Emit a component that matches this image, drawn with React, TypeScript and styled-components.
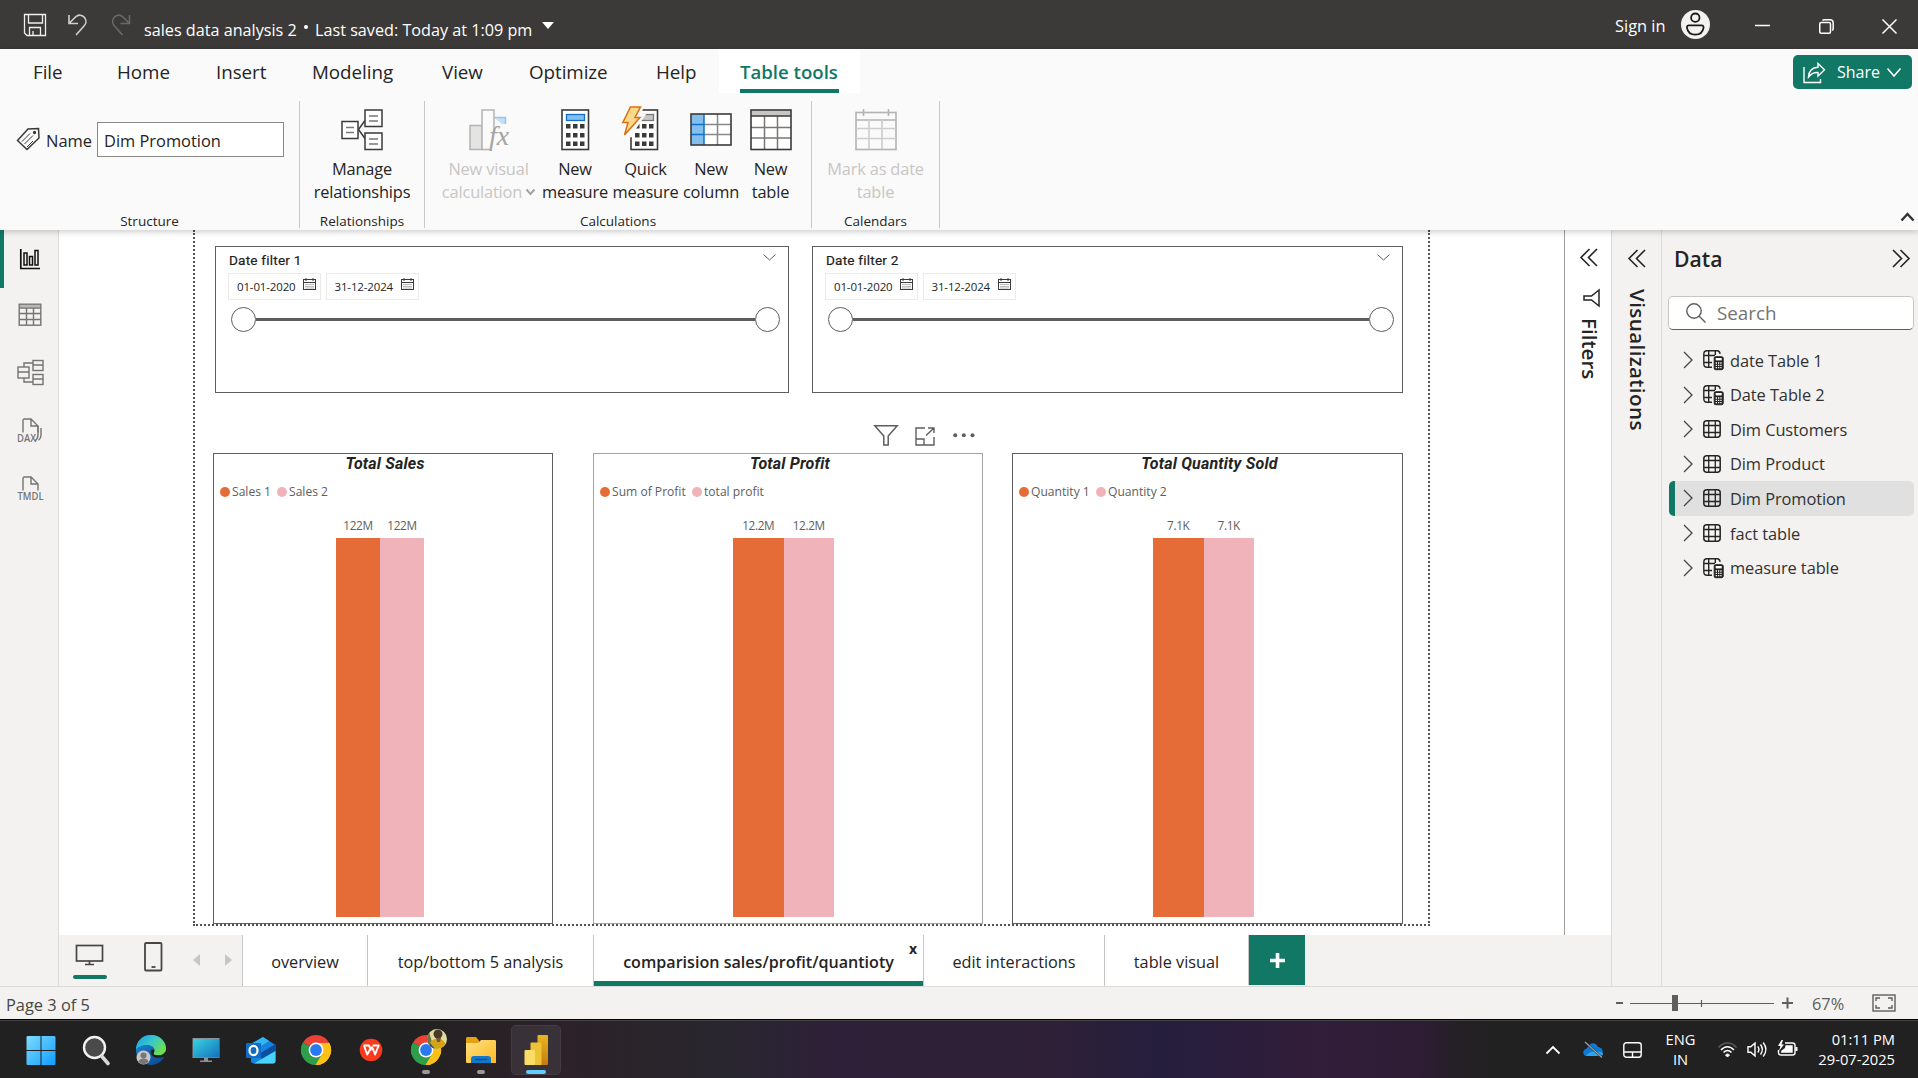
import React from 'react';
import styled, { createGlobalStyle } from 'styled-components';

const GREEN = '#117865';
const UI = "'Open Sans', 'Noto Sans', sans-serif";
const DIN = "Roboto, 'Open Sans', sans-serif";

const Global = createGlobalStyle`
  * { box-sizing: border-box; }
  body { margin: 0; overflow: hidden; font-family: ${UI}; color: #252423; }
  svg { display: block; flex: none; overflow: visible; }
`;

const Screen = styled.div`
  width: 1918px;
  height: 1078px;
  display: flex;
  flex-direction: column;
  background: #fff;
  overflow: hidden;
`;

/* ---------- text ---------- */
const Label = styled.span<{ $size: number; $lh?: number; $color?: string; $weight?: number; $track?: number; $w?: number; $align?: string }>`
  display: block;
  flex: none;
  white-space: nowrap;
  font-size: ${p => p.$size}px;
  line-height: ${p => p.$lh ?? 23}px;
  color: ${p => p.$color ?? '#252423'};
  font-weight: ${p => p.$weight ?? 400};
  letter-spacing: ${p => p.$track ?? 0}px;
  width: ${p => (p.$w ? `${p.$w}px` : 'auto')};
  text-align: ${p => p.$align ?? 'left'};
`;

/* ---------- title bar ---------- */
const TitleBar = styled.header`
  height: 49px;
  flex: none;
  display: flex;
  background: #3b3a38;
`;
const QuickAccess = styled.div`
  width: 144px;
  padding: 13px 0 0 23px;
  display: flex;
  gap: 20px;
`;
const DocTitle = styled.div`
  display: flex;
  flex: 1;
  padding-top: 19px;
`;
const DocName = styled.div`width: 157px;`;
const Bullet = styled.i`
  width: 4px;
  height: 4px;
  margin: 6px 7px 0 3px;
  border-radius: 50%;
  background: #fff;
`;
const DocSaved = styled.div`width: 223px;`;
const Caret = styled.i`
  margin: 3px 0 0 4px;
  width: 0;
  height: 0;
  border: 6.5px solid transparent;
  border-top: 7px solid #fff;
`;
const WindowControls = styled.div`
  width: 303px;
  display: flex;
  padding-top: 10px;
`;
const SignIn = styled.div`
  width: 66px;
  padding-top: 4px;
`;

/* ---------- ribbon ---------- */
const Ribbon = styled.section`
  height: 181px;
  flex: none;
  background: #fafafa;
  position: relative;
  z-index: 2;
  box-shadow: 0 2px 6px rgba(0, 0, 0, 0.2);
  display: flex;
  flex-direction: column;
`;
const TabStrip = styled.nav`
  height: 44px;
  display: flex;
  padding-left: 33px;
`;
const RibbonTab = styled.div<{ $w: number }>`
  width: ${p => p.$w}px;
  padding-top: 10px;
`;
const ActiveRibbonTab = styled.div`
  width: 141px;
  background: #fff;
  padding: 10px 0 0 21px;
`;
const ActiveLine = styled.i`
  display: block;
  width: 99px;
  height: 4px;
  margin-top: 4px;
  background: ${GREEN};
`;
const ShareButton = styled.button`
  margin: 6px 6px 0 auto;
  width: 119px;
  height: 34px;
  padding: 1px 0 0 10px;
  border: 0;
  border-radius: 5px;
  background: ${GREEN};
  display: flex;
  align-items: center;
  gap: 7px;
  font-family: inherit;
`;
const ShareText = styled.div`
  width: 47px;
  padding-left: 4px;
`;
const RibbonBody = styled.div`
  flex: 1;
  display: flex;
  padding-top: 8px;
`;
const Group = styled.div<{ $w: number }>`
  width: ${p => p.$w}px;
  height: 127px;
  border-right: 1px solid #c8c8c8;
  display: flex;
  flex-direction: column;
`;
const GroupItems = styled.div<{ $pad?: number }>`
  height: 108px;
  flex: none;
  display: flex;
  padding-left: ${p => p.$pad ?? 0}px;
`;
const GroupName = styled.div`
  flex: none;
  text-align: center;
  padding-top: 4px;
  font-size: 13.5px;
  line-height: 16px;
`;
const Command = styled.div<{ $w: number }>`
  width: ${p => p.$w}px;
  display: flex;
  flex-direction: column;
  align-items: center;
`;
const CommandIcon = styled.div`
  height: 56px;
  padding-top: 8px;
`;
const CommandLine = styled.div`
  display: flex;
  align-items: center;
  gap: 4px;
`;
const NameField = styled.div`
  display: flex;
  padding: 21px 0 0 16px;
  width: 100%;
`;
const NameLabel = styled.div`
  padding: 7px 0 0 6px;
  width: 57px;
`;
const TagSlot = styled.div`padding-top: 5px; width: 24px;`;
const NameInput = styled.div`
  width: 187px;
  height: 35px;
  border: 1px solid #8a8886;
  background: #fff;
  padding: 6px 0 0 6px;
`;
const CollapseSlot = styled.div`
  margin-left: auto;
  padding: 112px 4px 0 0;
`;

/* ---------- workspace ---------- */
const Workspace = styled.main`
  height: 756px;
  flex: none;
  display: flex;
`;
const ViewRail = styled.aside`
  width: 59px;
  background: #f3f2f1;
  border-right: 1px solid #dddbd9;
  display: flex;
  flex-direction: column;
`;
const RailItem = styled.div<{ $active?: boolean }>`
  height: 58px;
  border-left: 4px solid ${p => (p.$active ? GREEN : 'transparent')};
  padding: 0 2px ${p => (p.$active ? 0 : 5)}px 0;
  display: flex;
  align-items: center;
  justify-content: center;
`;
const Stage = styled.div`
  width: 1552px;
  display: flex;
  flex-direction: column;
`;
const CanvasRow = styled.div`
  height: 705px;
  display: flex;
`;
const Canvas = styled.div`
  width: 1505px;
  padding-left: 134px;
  background: #fff;
`;
const ReportPage = styled.div`
  width: 1237px;
  height: 696px;
  border: 2px dotted #555351;
  border-top: 0;
  padding-top: 16px;
`;
const SlicerRow = styled.div`
  display: flex;
  gap: 23px;
  padding-left: 20px;
`;
const Slicer = styled.section<{ $w: number }>`
  width: ${p => p.$w}px;
  height: 147px;
  border: 1px solid #605e5c;
  padding: 0 12px 0 12px;
`;
const SlicerHead = styled.div`
  height: 26px;
  display: flex;
  justify-content: space-between;
  padding: 3px 0 0 1px;
`;
const SlicerTitle = styled.h4`
  margin: 0;
  font: 400 13.6px/20px ${DIN};
  letter-spacing: 0.2px;
  color: #1b1a19;
  -webkit-text-stroke: 0.2px #252423;
`;
const SlicerChevron = styled.div`padding-top: 4px;`;
const DateRow = styled.div`
  display: flex;
  gap: 4.5px;
`;
const DateInput = styled.div`
  width: 93px;
  height: 27px;
  border: 1px solid #edebe9;
  padding: 4px 4px 0 8px;
  display: flex;
  justify-content: space-between;
`;
const Range = styled.div`
  display: flex;
  align-items: center;
  padding: 6.5px 2px 0 3px;
  margin-right: -6px;
`;
const Thumb = styled.i`
  width: 25px;
  height: 25px;
  flex: none;
  border: 1.5px solid #605e5c;
  border-radius: 50%;
  background: #fff;
`;
const Track = styled.i`
  flex: 1;
  height: 3px;
  background: #605e5c;
`;
const VisualHeader = styled.div`
  height: 60px;
  display: flex;
  padding: 32px 0 0 679px;
  gap: 17px;
`;
const ChartRow = styled.div`
  display: flex;
  padding-left: 18px;
`;
const ChartCard = styled.section<{ $w: number; $gap?: number; $tone?: string }>`
  width: ${p => p.$w}px;
  height: 471px;
  flex: none;
  margin-right: ${p => p.$gap ?? 0}px;
  border: 1px solid ${p => p.$tone ?? '#605e5c'};
`;
const ChartTitle = styled.h3`
  margin: 0;
  padding-left: 4px;
  font: italic 700 16px/20px ${DIN};
  letter-spacing: 0.2px;
  text-align: center;
  color: #252423;
`;
const Legend = styled.div`
  display: flex;
  height: 26px;
  padding: 8px 0 0 6px;
`;
const LegendItem = styled.div<{ $w: number }>`
  display: flex;
  width: ${p => p.$w}px;
  gap: 2px;
`;
const Dot = styled.i<{ $color: string }>`
  width: 10px;
  height: 10px;
  margin-top: 5px;
  border-radius: 50%;
  background: ${p => p.$color};
`;
const Bars = styled.div<{ $left: number }>`
  display: flex;
  padding: 14px 0 0 ${p => p.$left}px;
`;
const BarColumn = styled.div<{ $w: number }>`
  width: ${p => p.$w}px;
`;
const Bar = styled.div<{ $color: string }>`
  height: 379px;
  margin-top: 2px;
  background: ${p => p.$color};
`;

/* ---------- side panes ---------- */
const FilterPane = styled.aside`
  width: 47px;
  border-left: 1px solid #a19f9d;
  display: flex;
  flex-direction: column;
  align-items: flex-start;
  padding: 18px 0 0 15px;
  background: #fff;
`;
const VizPane = styled.aside`
  width: 51px;
  background: #f3f2f1;
  border-left: 1px solid #dddbd9;
  border-right: 1px solid #dddbd9;
  padding: 19px 0 0 16px;
`;
const FunnelSlot = styled.div`padding: 22px 0 0 3px; height: 52px;`;
const Vertical = styled.div<{ $top: number; $track?: number }>`
  writing-mode: vertical-rl;
  font-weight: 600;
  font-size: 20.6px;
  line-height: 24px;
  letter-spacing: ${p => p.$track ?? 0}px;
  margin: ${p => p.$top}px 0 0 -2px;
  white-space: nowrap;
`;
const DataPane = styled.aside`
  flex: 1;
  background: #f3f2f1;
  padding: 15px 4px 0 6px;
`;
const DataHead = styled.div`
  display: flex;
  justify-content: space-between;
  padding: 0 4px 0 6px;
  height: 51px;
`;
const ChevronSlot = styled.div`padding-top: 4px;`;
const SearchBox = styled.div`
  height: 34px;
  border: 1px solid #c8c6c4;
  border-bottom-color: #605e5c;
  border-radius: 5px;
  background: #fff;
  display: flex;
  align-items: center;
  gap: 11px;
  padding-left: 17px;
`;
const TableList = styled.div`
  padding: 13px 0 0 1px;
`;
const TableRow = styled.div<{ $selected?: boolean }>`
  height: 34.55px;
  display: flex;
  align-items: center;
  border-radius: 5px;
  border-left: 6px solid ${p => (p.$selected ? GREEN : 'transparent')};
  background: ${p => (p.$selected ? '#e0e0e0' : 'transparent')};
  padding-left: 8px;
`;
const ExpandSlot = styled.div`width: 20px;`;
const TableIconSlot = styled.div`width: 27px;`;

/* ---------- page tabs ---------- */
const PageBar = styled.div`
  height: 51px;
  display: flex;
  background: #f3f2f1;
`;
const LayoutButtons = styled.div`
  width: 183px;
  display: flex;
  padding-left: 14px;
`;
const DesktopButton = styled.div`
  width: 70px;
  padding-top: 8px;
`;
const DesktopLine = styled.i`
  display: block;
  width: 34px;
  height: 4px;
  margin-top: 10px;
  border-radius: 2px;
  background: ${GREEN};
`;
const PhoneButton = styled.div`width: 50px; padding: 7px 0 0 1px;`;
const PageArrow = styled.div`
  padding-top: 19px;
  &:not(:last-child) { width: 32px; }
`;
const PageTab = styled.div<{ $w: number; $active?: boolean }>`
  width: ${p => p.$w}px;
  border-left: 1px solid #c8c6c4;
  background: #fff;
  display: flex;
  justify-content: center;
  padding-top: 16px;
  position: relative;
  box-shadow: ${p => (p.$active ? `inset 0 -5px 0 ${GREEN}` : 'none')};
`;
const TabClose = styled.span`
  position: absolute;
  right: 6px;
  top: 2px;
  font-size: 14px;
  font-weight: 700;
  line-height: 23px;
`;
const AddPage = styled.div`
  width: 57px;
  height: 50px;
  background: ${GREEN};
  border-left: 1px solid #c8c6c4;
  display: flex;
  align-items: center;
  justify-content: center;
`;

/* ---------- status bar ---------- */
const StatusBar = styled.footer`
  height: 33px;
  flex: none;
  background: #f3f2f1;
  border-top: 1px solid #dddbd9;
  display: flex;
  justify-content: space-between;
  padding: 6px 22px 0 6px;
`;
const ZoomControls = styled.div`
  display: flex;
  height: 20px;
  align-items: center;
`;
const ZoomText = styled.div`
  width: 79px;
  padding: 1px 0 0 19px;
`;

/* ---------- taskbar ---------- */
const Taskbar = styled.footer`
  flex: 1;
  border-top: 1px solid #000;
  box-shadow: inset 0 1px 0 #444;
  display: flex;
  justify-content: space-between;
  background: linear-gradient(90deg, #212121 0, #212121 400px, #2d2129 540px, #2b2329 600px, #28262f 730px, #2e2038 830px,
    #2f2037 1040px, #251e3d 1160px, #321d3a 1320px, #2e1d35 1420px, #242025 1460px, #212121 1500px);
`;
const Apps = styled.div`
  display: flex;
  padding: 5px 0 0 16px;
  gap: 5px;
`;
const TaskbarApp = styled.div<{ $active?: boolean }>`
  width: 50px;
  height: 50px;
  border-radius: 5px;
  border: 1px solid ${p => (p.$active ? '#453c43' : 'transparent')};
  background: ${p => (p.$active ? '#393138' : 'transparent')};
  display: flex;
  flex-direction: column;
  align-items: center;
  padding-top: 9px;
`;
const RunMark = styled.i<{ $active?: boolean }>`
  width: ${p => (p.$active ? 20 : 8)}px;
  height: 4px;
  border-radius: 2px;
  margin-top: 5px;
  background: ${p => (p.$active ? '#60cdff' : '#9a9a9a')};
`;
const Tray = styled.div`
  display: flex;
  padding: 10px 23px 0 0;
`;
const TraySlot = styled.div<{ $w: number; $top?: number }>`
  width: ${p => p.$w}px;
  padding-top: ${p => p.$top ?? 0}px;
`;
const TrayText = styled.div<{ $w: number; $align: string }>`
  width: ${p => p.$w}px;
  text-align: ${p => p.$align};
  font-size: 14.7px;
  line-height: 19.8px;
  color: #fff;
  white-space: nowrap;
`;

/* ---------- icons ---------- */
const SaveIcon = () => (
  <svg width="24" height="24" viewBox="0 0 24 24" fill="none" stroke="#f0efee" strokeWidth="1.3">
    <path d="M1.5 1.5h21v21H4L1.5 20z" /><path d="M5.5 1.5v8.5h14V1.5M6.5 22.5v-8h11v8M10 18v4.5" />
  </svg>
);
const UndoIcon = ({ color, flip }: { color: string; flip?: boolean }) => (
  <svg width="24" height="24" viewBox="0 0 24 24" fill="none" stroke={color} strokeWidth="1.6">
    <g transform={flip ? 'translate(20 0) scale(-1 1)' : 'translate(.5 0)'}>
      <path d="M1.500 2v8.500h9M1.500 10.500L8 4c3-3 7-2 9 .5s2 6-.5 8.500L8.500 22" />
    </g>
  </svg>
);
const AvatarIcon = () => (
  <svg width="30" height="30" viewBox="0 0 30 30">
    <circle cx="14.500" cy="14.500" r="14.500" fill="#f3f2f1" />
    <g fill="none" stroke="#1b1a19" strokeWidth="1.800">
      <circle cx="14.300" cy="7.700" r="4.200" />
      <path d="M8 15.300h12.500c1.500 0 2.300 1 2 2.600-.7 4.200-3.900 6.800-8.200 6.800s-7.600-2.600-8.300-6.800c-.3-1.600.5-2.600 2-2.600z" />
    </g>
  </svg>
);
const MinIcon = () => <svg width="15" height="15"><path d="M0 6.500h15" stroke="#fff" strokeWidth="1.500" /></svg>;
const RestoreIcon = () => (
  <svg width="15" height="15" fill="none" stroke="#fff" strokeWidth="1.500">
    <rect x=".75" y="3.500" width="10.750" height="10.750" rx="1.500" /><path d="M3.500 1.500C4 .9 4.700.75 5.500.75h5.500c2 0 3.200 1.200 3.200 3.200V9.500c0 .9-.3 1.500-.9 2" />
  </svg>
);
const CloseIcon = () => <svg width="15" height="15"><path d="M.5.5l14 14M14.500.5l-14 14" stroke="#fff" strokeWidth="1.500" /></svg>;
const ShareIcon = () => (
  <svg width="23" height="22" viewBox="0 0 23 22" fill="none" stroke="#fff" strokeWidth="1.400">
    <path d="M1 5v15.500h16.500V17" />
    <path d="M15 1.500l6.500 6.300-6.500 6.400v-3.700c-4-.3-7 1.200-9.500 4.500.3-5.500 3.500-9.500 9.500-9.800z" />
  </svg>
);
const Chevron = ({ w, h, color, sw = 1.3, up }: { w: number; h: number; color: string; sw?: number; up?: boolean }) => (
  <svg width={w} height={h} fill="none" stroke={color} strokeWidth={sw}>
    <path d={up ? `M.5 ${h - 0.5}L${w / 2} 1L${w - 0.5} ${h - 0.5}` : `M.5 .5L${w / 2} ${h - 1}L${w - 0.5} .5`} />
  </svg>
);
const ExpandIcon = () => <svg width="10" height="18" fill="none" stroke="#484644" strokeWidth="1.300"><path d="M1 1l8 8-8 8" /></svg>;
const DoubleChevron = ({ right }: { right?: boolean }) => (
  <svg width="18" height="19" fill="none" stroke="#252423" strokeWidth="1.600">
    <g transform={right ? 'translate(18 0) scale(-1 1)' : undefined}>
      <path d="M9.500 1L1 9.500l8.500 8.500M17 1L8.500 9.500 17 18" />
    </g>
  </svg>
);
const TagIcon = () => (
  <svg width="24" height="24" viewBox="0 0 24 24" fill="none" stroke="#3b3a39" strokeWidth="1.500">
    <path d="M1.500 13.500L12 2l10.500-.5.5 9.500L11 22.500z" /><path d="M6 14.500l8-8M8.500 17l8.500-8.500M11 20l6-6" strokeWidth="1" /><circle cx="18.500" cy="5.500" r=".9" fill="#3b3a39" />
  </svg>
);
const RelationIcon = () => (
  <svg width="42" height="42" viewBox="0 0 42 42" fill="none" stroke="#3b3a39" strokeWidth="1.500">
    <path d="M17.500 20.500l6.500-9M17.500 20.500l6.500 9" />
    <g fill="#fff"><rect x="1" y="12.500" width="16" height="17" /><rect x="24" y="1" width="17" height="16.500" /><rect x="24" y="24" width="17" height="16.500" /></g>
    <path d="M5 18.500h8M5 23.500h8M28 7h9M28 12h9M28 30h9M28 35h9" stroke="#797775" strokeWidth="1.300" />
  </svg>
);
const VisualCalcIcon = () => (
  <svg width="39" height="42" viewBox="0 0 39 42" fill="none" stroke="#b5b3b1" strokeWidth="1.500">
    <rect x="1" y="16.500" width="12" height="24" fill="#e4e4e3" /><rect x="13" y="1" width="12" height="39.500" fill="#fafafa" />
    <path d="M25 8.500h11.500V18" stroke="#9ac4e8" fill="#c5dff5" />
    <path d="M21 42V30l5-12 4-3h10v27z" fill="#fafafa" stroke="none" />
    <text x="20" y="36" fontFamily="Liberation Serif, serif" fontStyle="italic" fontSize="28" fill="#a6a4a2" stroke="none">fx</text>
  </svg>
);
const Keys = () => (
  <g fill="#3b3a39">
    {[15, 24, 32.500].map(y => [5, 12, 19].map(x => <rect key={`${x}-${y}`} x={x} y={y} width="4.500" height="4.500" />))}
  </g>
);
const MeasureIcon = () => (
  <svg width="29" height="42" viewBox="0 0 29 42">
    <rect x="1" y="1" width="26.500" height="39.500" fill="#fff" stroke="#3b3a39" strokeWidth="1.600" />
    <rect x="5.500" y="5.500" width="18" height="6" fill="#83beec" stroke="#1070c8" strokeWidth="1.300" /><Keys />
  </svg>
);
const QuickIcon = () => (
  <svg width="47" height="42" viewBox="0 0 47 42">
    <g transform="translate(8 0)">
      <rect x="1" y="1" width="26.500" height="39.500" fill="#fff" stroke="#3b3a39" strokeWidth="1.600" />
      <rect x="5.500" y="5.500" width="18" height="6" fill="#c8c6c4" stroke="#797775" strokeWidth="1.300" /><Keys />
    </g>
    <path d="M7-4H21.500L17 6h5L11 22 9.500 27H6z" fill="#fafafa" stroke="#fafafa" strokeWidth="2.500" />
    <path d="M8.500-2H18.500L13 8.500h5L2.500 26l3.500-12.500H.8z" fill="#fbd98a" stroke="#d96f10" strokeWidth="1.500" />
  </svg>
);
const ColumnIcon = () => (
  <svg width="42" height="42" viewBox="0 0 42 42" fill="none">
    <rect x="1" y="5" width="40" height="31" fill="#fff" /><rect x="1" y="5" width="13" height="31" fill="#83beec" />
    <path d="M14 15.500h27M14 25.500h27M27.500 5v31" stroke="#8a8886" strokeWidth="1.500" />
    <path d="M1 15.500h13M1 25.500h13M14 5v31" stroke="#1070c8" strokeWidth="1.500" />
    <rect x="1" y="5" width="40" height="31" stroke="#3b3a39" strokeWidth="1.600" />
  </svg>
);
const NewTableIcon = () => (
  <svg width="42" height="42" viewBox="0 0 42 42" fill="none">
    <rect x="1" y="1" width="40" height="39.500" fill="#fff" /><rect x="1" y="1" width="40" height="6" fill="#c8c6c4" />
    <path d="M1 18.500h40M1 29h40M14.500 7v33M27.500 7v33" stroke="#797775" strokeWidth="1.500" />
    <path d="M1 7h40" stroke="#3b3a39" strokeWidth="1.500" /><rect x="1" y="1" width="40" height="39.500" stroke="#3b3a39" strokeWidth="1.600" />
  </svg>
);
const CalendarLarge = () => (
  <svg width="42" height="42" viewBox="0 0 42 42" fill="none" stroke="#b5b3b1" strokeWidth="1.600">
    <rect x="1" y="3.500" width="40" height="37" /><path d="M1 11h40M8.500 0v7M33.500 0v7" /><path d="M1 19.500h40M1 29.500h40M14 11v29M27 11v29" stroke="#cfcdcb" />
  </svg>
);
const ReportIcon = () => (
  <svg width="20" height="21" viewBox="0 0 20 21" fill="none" stroke="#11100f" strokeWidth="1.500">
    <path d="M.8 0v19.500H20" strokeWidth="1.700" /><rect x="4" y="4" width="3" height="12" /><rect x="9.500" y="7.500" width="3" height="8.500" /><rect x="15" y="1.500" width="3" height="14.500" />
  </svg>
);
const GridIcon = () => (
  <svg width="24" height="24" viewBox="0 0 24 24" fill="none" stroke="#767473" strokeWidth="1.400">
    <rect x="1.200" y="1.200" width="21.600" height="21" /><path d="M1 5h22M1 10.500h22M1 16.500h22M8.500 5v17M15.500 5v17" /><path d="M2 3h20" stroke="#bab8b6" strokeWidth="2" />
  </svg>
);
const ModelIcon = () => (
  <svg width="27" height="27" viewBox="0 0 27 27" fill="none" stroke="#767473" strokeWidth="1.400">
    <rect x="1" y="8" width="11" height="11" /><rect x="16" y="1.500" width="10" height="10" /><rect x="16" y="15.500" width="10" height="10" />
    <path d="M1 13h11M16 6h10M16 20h10M7 8V4h9M7 19v4h9" />
  </svg>
);
const DocIcon = ({ label, double }: { label: string; double?: boolean }) => (
  <svg width="27" height="26" viewBox="0 0 27 26" fill="none" stroke="#767473" strokeWidth="1.400">
    <path d="M6 14.500V2.500C6 1.500 6.500 1 7.500 1H14l7 7v6.500M14 1v7h7" />
    {double && <path d="M21 8v8.500c0 3-1 5-3 6.500M24 10v7c0 2.500-.8 4-2.500 5.200" />}
    <text x={double ? 0 : 0.5} y="23.500" fontFamily="Open Sans, sans-serif" fontWeight="600" fontSize="9.800" fill="#767473" stroke="none"
      textLength={double ? 19 : 26} lengthAdjust="spacingAndGlyphs">{label}</text>
  </svg>
);
const SmallCalendar = () => (
  <svg width="13" height="12" viewBox="0 0 13 12" fill="none" stroke="#3b3a39" strokeWidth="1">
    <rect x=".5" y="1.500" width="12" height="10" /><path d="M.5 4.500h12M3 0v3M10 0v3" /><path d="M2.500 6.500h8.500M2.500 8.500h8.500M2.500 10h8.500" strokeDasharray="1 1" stroke="#797775" />
  </svg>
);
const FilterIcon = () => (
  <svg width="24" height="21" viewBox="0 0 24 21" fill="none" stroke="#605e5c" strokeWidth="1.500"><path d="M.8.8h22.400L14.200 11v9h-4.400v-9z" /></svg>
);
const FocusIcon = () => (
  <svg width="20" height="19" viewBox="0 0 20 19" fill="none" stroke="#605e5c" strokeWidth="1.400">
    <path d="M10 1H1v17h18v-8M13 1h6v5M1 12h8v6M11 8.500L19 1" />
  </svg>
);
const MoreIcon = () => (
  <svg width="22" height="5" fill="#605e5c"><circle cx="2.200" cy="2.200" r="2" /><circle cx="10.800" cy="2.200" r="2" /><circle cx="19.500" cy="2.200" r="2" /></svg>
);
const FunnelSide = () => (
  <svg width="17" height="18" viewBox="0 0 17 18" fill="none" stroke="#252423" strokeWidth="1.500"><path d="M16 1v16L8.500 11H1V7h7.500z" /></svg>
);
const SearchIcon = () => (
  <svg width="20" height="20" viewBox="0 0 20 20" fill="none" stroke="#605e5c" strokeWidth="1.400"><circle cx="8" cy="8" r="7.200" /><path d="M13.200 13.200l6.300 6.300" /></svg>
);
const TableIcon = () => (
  <svg width="21" height="18" viewBox="0 0 21 18" fill="none" stroke="#252423" strokeWidth="1.500">
    <rect x=".8" y=".8" width="16.400" height="16.400" rx="3" /><path d="M5.700 1v16M12.300 1v16M1 5.500h16M1 12.500h16" strokeWidth="1.300" />
  </svg>
);
const CalcTableIcon = () => (
  <svg width="21" height="20" viewBox="0 0 21 20" fill="none" stroke="#252423" strokeWidth="1.400">
    <path d="M9 17.300H4c-2 0-3.200-1.200-3.200-3.200V4C.8 2 2 .8 4 .8h9.800c2 0 3.200 1.200 3.200 3.200M5.700 1v16M12.300 1v4M1 5.500h11M1 12.500h8" />
    <rect x="11.200" y="6.700" width="9" height="13" rx="1.500" fill="#252423" strokeWidth="1" /><rect x="12.700" y="8" width="6" height="2.400" fill="#fff" stroke="none" />
    <path d="M12.700 13h6M12.700 15.300h6M12.700 17.600h6" stroke="#fff" strokeWidth="1.300" strokeDasharray="1.300 1" />
  </svg>
);
const DesktopIcon = () => (
  <svg width="34" height="22" viewBox="0 0 34 22" fill="none" stroke="#484644" strokeWidth="1.700">
    <rect x="3.500" y="2.500" width="26" height="15.500" /><path d="M16.500 18v3M12 21.500h9" />
  </svg>
);
const PhoneIcon = () => (
  <svg width="19" height="30" viewBox="0 0 19 30" fill="none" stroke="#484644" strokeWidth="1.800"><rect x="1" y="1" width="16.500" height="27.500" rx="1" /><path d="M7.500 25h4" /></svg>
);
const Arrow = ({ left }: { left?: boolean }) => (
  <svg width="7" height="12"><path d={left ? 'M7 0v12L0 6z' : 'M0 0v12l7-6z'} fill="#c8c6c4" /></svg>
);
const PlusIcon = () => <svg width="15" height="15"><path d="M7.500 0v15M0 7.500h15" stroke="#fff" strokeWidth="3.600" /></svg>;
const ZoomSlider = () => (
  <svg width="177" height="18" viewBox="0 0 177 18" stroke="#605e5c" fill="none">
    <path d="M0 9h7M166 9h11M171.500 3.500v11" strokeWidth="2" /><path d="M14 9.500h144" strokeWidth="1" /><path d="M85.500 6v7" strokeWidth="1.200" />
    <rect x="56" y="1" width="6" height="16" fill="#605e5c" stroke="none" />
  </svg>
);
const FitIcon = () => (
  <svg width="24" height="18" viewBox="0 0 24 18" fill="none" stroke="#605e5c" strokeWidth="1.400">
    <rect x="1" y="1" width="22" height="16" /><path d="M4 7V4h4M16 4h4v3M20 11v3h-4M8 14H4v-3" />
  </svg>
);

/* taskbar artwork, each on a 30px tile */
const WindowsLogo = () => (
  <svg width="30" height="30" viewBox="0 0 30 30">
    <defs><linearGradient id="win" x1="0" y1="0" x2="1" y2="1" gradientUnits="objectBoundingBox"><stop stopColor="#7fdcff" /><stop offset="1" stopColor="#0f9dff" /></linearGradient></defs>
    <path fill="url(#win)" d="M2 1h12.500v14H.5V2.500C.5 1.500 1 1 2 1zM15.500 1H28c1 0 1.500.5 1.500 1.500V15h-14zM.5 16h14v14H2C1 30 .5 29.500.5 28.500zM15.500 16h14v12.500c0 1-.5 1.500-1.500 1.500H15.500z" />
  </svg>
);
const SearchLogo = () => (
  <svg width="30" height="30" viewBox="0 0 30 30"><circle cx="13.500" cy="12.500" r="10.500" fill="#4a4a4a" stroke="#f2f2f2" strokeWidth="2.400" /><path d="M21 21.500l6 7" stroke="#d6d9dc" strokeWidth="3.600" strokeLinecap="round" /></svg>
);
const EdgeLogo = () => (
  <svg width="30" height="30" viewBox="0 0 30 30">
    <defs>
      <linearGradient id="edgeA" x1="0" y1="0" x2="1" y2=".6"><stop stopColor="#1b9de2" /><stop offset=".5" stopColor="#35c6d0" /><stop offset="1" stopColor="#6fe04a" /></linearGradient>
      <linearGradient id="edgeB" x1="0" y1="0" x2=".8" y2="1"><stop stopColor="#1f8fe0" /><stop offset="1" stopColor="#0c4a92" /></linearGradient>
    </defs>
    <circle cx="15" cy="15" r="15" fill="url(#edgeB)" />
    <path d="M0 15C0 6 6.500 0 15 0s15 6 15 13.500c0 4.500-3.500 7-7.500 7-3 0-5-.8-5-2 0-.8 1-1.500 1-3.500 0-2.500-3-5-7-5C6 10 1 12 0 15z" fill="url(#edgeA)" />
    <path d="M14.500 16c0 5 4 8.500 14 6l2-2v-4l-4 3.500c-4 1.500-9 1-9-1 0-.8 1-1.500 1-3-1.500-1.500-4-1-4 .5z" fill="#202122" />
    <circle cx="7.500" cy="22.500" r="7" fill="#c9c7c5" /><circle cx="7.500" cy="20.500" r="3" fill="#777" /><path d="M2.500 26.500c1-4 9-4 10 0-2 3.500-8 3.500-10 0z" fill="#777" />
  </svg>
);
const MonitorLogo = () => (
  <svg width="30" height="30" viewBox="0 0 30 30">
    <defs><linearGradient id="mon" x1="0" y1="0" x2="1" y2="1"><stop stopColor="#38d3e0" /><stop offset="1" stopColor="#1370bd" /></linearGradient></defs>
    <rect x="1.500" y="3" width="27" height="20" fill="#8b9299" /><rect x="2.500" y="4" width="25.500" height="18.500" fill="url(#mon)" /><path d="M13 23h4v2.500h4V27H9v-1.500h4z" fill="#8c9096" />
  </svg>
);
const OutlookLogo = () => (
  <svg width="30" height="30" viewBox="0 0 30 30">
    <path d="M5 9L17 2l12.500 8v16c0 1.500-1 2.500-2.500 2.500H8c-2 0-3-1-3-2.500z" fill="#1683dc" />
    <path d="M5 9L17 2l6 4L9 15z" fill="#35b4f2" /><path d="M13 19L29.500 9v7L16 24z" fill="#0b4ea0" />
    <path d="M29.500 16v10c0 1.500-1 2.500-2.500 2.500H8z" fill="#48d3fb" />
    <rect x="0" y="8" width="15" height="15" rx="1" fill="#0f6cc9" /><ellipse cx="7.500" cy="15.500" rx="4" ry="4.600" fill="none" stroke="#fff" strokeWidth="2.200" />
  </svg>
);
const ChromeArt = () => (
  <g>
    <path d="M15 15L2 7.500A15 15 0 0 1 28 7.500z" fill="#ea4335" /><path d="M15 15L28 7.500A15 15 0 0 1 15 30z" fill="#fbc116" />
    <path d="M15 15v15A15 15 0 0 1 2 7.500z" fill="#2e9e4b" /><path d="M15 8h13.300A15 15 0 0 1 14 30l7-11.500z" fill="#fbc116" /><path d="M2 7.500L8.800 18.500 15 21l6-2-6.500 11A15 15 0 0 1 2 7.500z" fill="#2e9e4b" />
    <circle cx="15" cy="15" r="7.400" fill="#fff" /><circle cx="15" cy="15" r="5.900" fill="#2b79f0" />
  </g>
);
const ChromeLogo = () => <svg width="30" height="30" viewBox="0 0 30 30"><ChromeArt /></svg>;
const ChromeProfileLogo = () => (
  <svg width="30" height="30" viewBox="0 0 30 30">
    <ChromeArt />
    <clipPath id="face"><circle cx="26" cy="4" r="10" /></clipPath>
    <g clipPath="url(#face)"><rect x="15" y="-7" width="22" height="22" fill="#e0dca0" /><path d="M18-3l-3 6 3 9 3-5z" fill="#6d7440" /><circle cx="27" cy="-1" r="4.500" fill="#4b3a2c" /><path d="M18 14c0-9 4-10 9-10s8 3 9 10z" fill="#d2a416" /><path d="M25 3h5l-1 4h-3z" fill="#795638" /><path d="M19 8l6 7h-7z" fill="#2c4779" /></g>
  </svg>
);
const WpsLogo = () => (
  <svg width="30" height="30" viewBox="0 0 30 30"><circle cx="15" cy="15" r="11.300" fill="#f93a1c" /><path d="M7.500 10.500h5.500l2.200 5M8 10.500l3.200 9 4-7h1.200l2.700 7 3.500-9h-6" fill="none" stroke="#fff" strokeWidth="1.900" strokeLinejoin="round" /></svg>
);
const FolderLogo = () => (
  <svg width="30" height="30" viewBox="0 0 30 30">
    <defs><linearGradient id="fold" x1="0" y1="0" x2="1" y2="1"><stop stopColor="#ffe080" /><stop offset="1" stopColor="#fcb923" /></linearGradient></defs>
    <path d="M0 3.500C0 2.500.7 2 1.500 2H10l3 3.500V12H0z" fill="#e6a013" /><path d="M0 8h12l3-3h13.500c1 0 1.500.5 1.500 1.500V28H1.500C.5 28 0 27.500 0 26.500z" fill="url(#fold)" />
    <path d="M5 28v-4c0-2 1-3 3-3h14c2 0 3 1 3 3v4z" fill="#1277c9" /><path d="M9 24.500h12" stroke="#0b4c8c" strokeWidth="1.300" />
  </svg>
);
const PowerBiLogo = () => (
  <svg width="30" height="30" viewBox="0 0 30 30">
    <defs><linearGradient id="pb" x1="0" y1="0" x2="0" y2="1"><stop stopColor="#e9b520" /><stop offset="1" stopColor="#c67c10" /></linearGradient></defs>
    <rect x="16.500" y="0" width="10.500" height="30" rx="1" fill="url(#pb)" /><rect x="9.500" y="7.500" width="11" height="22.500" rx="1" fill="#edc234" /><rect x="3.500" y="15" width="10.500" height="15" rx="1" fill="#f9dd64" />
  </svg>
);
const CloudIcon = () => (
  <svg width="21" height="16" viewBox="0 0 21 16"><path d="M4 14c-5 0-5-7 0-7.500C6 0 13-.5 15 5c6 0 6.500 9 .5 9z" fill="#0f78d4" /><path d="M3 14c2-4 9-6 14-4 4 0 4 4 0 4z" fill="#2aa5ef" /><path d="M2 0l17 15.500" stroke="#212121" strokeWidth="2" /><path d="M2 0l17 15.500" stroke="#a0a0a0" strokeWidth="1.200" /></svg>
);
const TouchpadIcon = () => (
  <svg width="19" height="16" viewBox="0 0 19 16" fill="none" stroke="#fff" strokeWidth="1.400"><rect x=".8" y=".8" width="17.400" height="14.400" rx="2.500" /><path d="M1 10h17M9.500 10v5" /></svg>
);
const WifiIcon = () => (
  <svg width="19" height="16" viewBox="0 0 19 16" fill="none" stroke="#fff" strokeWidth="1.500">
    <path d="M.5 5.500c5-6 13-6 18 0" stroke="#5a5a5a" /><path d="M3 8c4-4.500 9-4.500 13 0M5.500 10.500c2.500-2.700 5.500-2.700 8 0" /><path d="M7.500 13c1.500-1.300 2.500-1.300 4 0l-2 2z" fill="#fff" strokeWidth="1" />
  </svg>
);
const VolumeIcon = () => (
  <svg width="20" height="17" viewBox="0 0 20 17" fill="none" stroke="#fff" strokeWidth="1.400"><path d="M1 5.800h2.800L8 2v13l-4.200-3.800H1zM10.800 5.500c1.500 2 1.500 4 0 6M13.500 3.500c2.600 3.500 2.600 6.500 0 10M16.200 1.500c3.500 4.500 3.500 9.500 0 14" /></svg>
);
const BatteryIcon = () => (
  <svg width="21" height="17" viewBox="0 0 21 17" fill="none" stroke="#fff" strokeWidth="1.400"><path d="M8 3h7.500c1.500 0 2.500 1 2.500 2.300v7.400c0 1.300-1 2.300-2.500 2.300H4C2.500 15 1.500 14 1.500 12.700V10" /><path d="M8.500 5.300h7.200v7.500H3.800l.7-2.300L8 8z" fill="#fff" stroke="none" /><path d="M19.500 7v4" strokeWidth="2" /><path d="M4.500 0L1 6h2.500L2 11l5-6.500H4.500L6 0z" fill="#fff" stroke="none" /></svg>
);

/* ---------- data ---------- */
const ORANGE = '#e66c37';
const PINK = '#f0b3b9';
const RIBBON_TABS: [string, number][] = [['File', 84], ['Home', 99], ['Insert', 96], ['Modeling', 130], ['View', 87], ['Optimize', 127], ['Help', 63]];
const CHARTS = [
  { title: 'Total Sales', w: 340, gap: 40, left: 122, bar: 44, value: '122M', names: ['Sales 1', 'Sales 2'], legend: [57, 60], tone: '#605e5c' },
  { title: 'Total Profit', w: 390, gap: 29, left: 139, bar: 50.5, value: '12.2M', names: ['Sum of Profit', 'total profit'], legend: [92, 80], tone: '#a5a3a1' },
  { title: 'Total Quantity Sold', w: 391, gap: 0, left: 140, bar: 50.5, value: '7.1K', names: ['Quantity 1', 'Quantity 2'], legend: [77, 80], tone: '#605e5c' },
];
const TABLES: { name: string; calc?: boolean; selected?: boolean }[] = [
  { name: 'date Table 1', calc: true }, { name: 'Date Table 2', calc: true }, { name: 'Dim Customers' }, { name: 'Dim Product' },
  { name: 'Dim Promotion', selected: true }, { name: 'fact table' }, { name: 'measure table', calc: true },
];
const PAGES: [string, number][] = [['overview', 125], ['top/bottom 5 analysis', 226], ['comparision sales/profit/quantioty', 330], ['edit interactions', 181], ['table visual', 144]];

type CommandProps = { w: number; icon: React.ReactNode; top: string; bottom: string; disabled?: boolean; menu?: boolean };
const RibbonCommand = ({ w, icon, top, bottom, disabled, menu }: CommandProps) => {
  const color = disabled ? '#c8c6c4' : '#252423';
  return (
    <Command $w={w}>
      <CommandIcon>{icon}</CommandIcon>
      <Label $size={16.4} $track={-0.17} $color={color}>{top}</Label>
      <CommandLine>
        <Label $size={16.4} $track={-0.17} $color={color}>{bottom}</Label>
        {menu && <Chevron w={9} h={6} color="#a6a4a2" sw={2} />}
      </CommandLine>
    </Command>
  );
};

const DateBox = ({ value }: { value: string }) => (
  <DateInput>
    <Label $size={11.5} $lh={18} $track={-0.15}>{value}</Label>
    <SmallCalendar />
  </DateInput>
);

const DateSlicer = ({ title, w }: { title: string; w: number }) => (
  <Slicer $w={w}>
    <SlicerHead>
      <SlicerTitle>{title}</SlicerTitle>
      <SlicerChevron><Chevron w={13} h={7} color="#605e5c" sw={1} /></SlicerChevron>
    </SlicerHead>
    <DateRow><DateBox value="01-01-2020" /><DateBox value="31-12-2024" /></DateRow>
    <Range><Thumb /><Track /><Thumb /></Range>
  </Slicer>
);

export default function App() {
  return (
    <Screen>
      <Global />
      <TitleBar>
        <QuickAccess><SaveIcon /><UndoIcon color="#d2d0ce" /><UndoIcon color="#6b6967" flip /></QuickAccess>
        <DocTitle>
          <DocName><Label $size={16.2} $color="#fff">sales data analysis 2</Label></DocName>
          <Bullet />
          <DocSaved><Label $size={16.2} $color="#fff">Last saved: Today at 1:09 pm</Label></DocSaved>
          <Caret />
        </DocTitle>
        <WindowControls>
          <SignIn><Label $size={16.4} $color="#fff">Sign in</Label></SignIn>
          <TraySlot $w={74}><AvatarIcon /></TraySlot>
          <TraySlot $w={64} $top={9}><MinIcon /></TraySlot>
          <TraySlot $w={63} $top={9}><RestoreIcon /></TraySlot>
          <TraySlot $w={15} $top={9}><CloseIcon /></TraySlot>
        </WindowControls>
      </TitleBar>

      <Ribbon>
        <TabStrip>
          {RIBBON_TABS.map(([name, w]) => (
            <RibbonTab key={name} $w={w}><Label $size={18.8} $lh={26} $track={-0.05}>{name}</Label></RibbonTab>
          ))}
          <ActiveRibbonTab>
            <Label $size={18.6} $lh={26} $weight={600} $color={GREEN}>Table tools</Label>
            <ActiveLine />
          </ActiveRibbonTab>
          <ShareButton>
            <ShareIcon />
            <ShareText><Label $size={16} $color="#fff">Share</Label></ShareText>
            <Chevron w={14} h={9} color="#fff" sw={1.5} />
          </ShareButton>
        </TabStrip>
        <RibbonBody>
          <Group $w={300}>
            <GroupItems>
              <NameField>
                <TagSlot><TagIcon /></TagSlot>
                <NameLabel><Label $size={16.5}>Name</Label></NameLabel>
                <NameInput><Label $size={16.4}>Dim Promotion</Label></NameInput>
              </NameField>
            </GroupItems>
            <GroupName>Structure</GroupName>
          </Group>
          <Group $w={125}>
            <GroupItems><RibbonCommand w={124} icon={<RelationIcon />} top="Manage" bottom="relationships" /></GroupItems>
            <GroupName>Relationships</GroupName>
          </Group>
          <Group $w={387}>
            <GroupItems $pad={12}>
              <RibbonCommand w={103} icon={<VisualCalcIcon />} top="New visual" bottom="calculation" disabled menu />
              <RibbonCommand w={70} icon={<MeasureIcon />} top="New" bottom="measure" />
              <RibbonCommand w={71} icon={<QuickIcon />} top="Quick" bottom="measure" />
              <RibbonCommand w={60} icon={<ColumnIcon />} top="New" bottom="column" />
              <RibbonCommand w={59} icon={<NewTableIcon />} top="New" bottom="table" />
            </GroupItems>
            <GroupName>Calculations</GroupName>
          </Group>
          <Group $w={128}>
            <GroupItems><RibbonCommand w={127} icon={<CalendarLarge />} top="Mark as date" bottom="table" disabled /></GroupItems>
            <GroupName>Calendars</GroupName>
          </Group>
          <CollapseSlot><Chevron w={13} h={8} color="#323130" sw={2.4} up /></CollapseSlot>
        </RibbonBody>
      </Ribbon>

      <Workspace>
        <ViewRail>
          <RailItem $active><ReportIcon /></RailItem>
          <RailItem><GridIcon /></RailItem>
          <RailItem><ModelIcon /></RailItem>
          <RailItem><DocIcon label="DAX" double /></RailItem>
          <RailItem><DocIcon label="TMDL" /></RailItem>
        </ViewRail>

        <Stage>
          <CanvasRow>
            <Canvas>
              <ReportPage>
                <SlicerRow>
                  <DateSlicer title="Date filter 1" w={574} />
                  <DateSlicer title="Date filter 2" w={591} />
                </SlicerRow>
                <VisualHeader>
                  <FilterIcon />
                  <TraySlot $w={21} $top={2}><FocusIcon /></TraySlot>
                  <TraySlot $w={22} $top={8}><MoreIcon /></TraySlot>
                </VisualHeader>
                <ChartRow>
                  {CHARTS.map(c => (
                    <ChartCard key={c.title} $w={c.w} $gap={c.gap} $tone={c.tone}>
                      <ChartTitle>{c.title}</ChartTitle>
                      <Legend>
                        {c.names.map((n, i) => (
                          <LegendItem key={n} $w={c.legend[i]}>
                            <Dot $color={i ? PINK : ORANGE} />
                            <Label $size={12.1} $lh={20} $color="#605e5c">{n}</Label>
                          </LegendItem>
                        ))}
                      </Legend>
                      <Bars $left={c.left}>
                        {[ORANGE, PINK].map(color => (
                          <BarColumn key={color} $w={c.bar}>
                            <Label $size={11.8} $lh={22} $color="#605e5c" $align="center" $track={-0.35}>{c.value}</Label>
                            <Bar $color={color} />
                          </BarColumn>
                        ))}
                      </Bars>
                    </ChartCard>
                  ))}
                </ChartRow>
              </ReportPage>
            </Canvas>
            <FilterPane>
              <DoubleChevron />
              <FunnelSlot><FunnelSide /></FunnelSlot>
              <Vertical $top={-1}>Filters</Vertical>
            </FilterPane>
          </CanvasRow>
          <PageBar>
            <LayoutButtons>
              <DesktopButton><DesktopIcon /><DesktopLine /></DesktopButton>
              <PhoneButton><PhoneIcon /></PhoneButton>
              <PageArrow><Arrow left /></PageArrow>
              <PageArrow><Arrow /></PageArrow>
            </LayoutButtons>
            {PAGES.map(([name, w], i) => (
              <PageTab key={name} $w={w} $active={i === 2}>
                <Label $size={i === 2 ? 16.1 : 16.3} $weight={i === 2 ? 600 : 400}>{name}</Label>
                {i === 2 && <TabClose>x</TabClose>}
              </PageTab>
            ))}
            <AddPage><PlusIcon /></AddPage>
          </PageBar>
        </Stage>

        <VizPane>
          <DoubleChevron />
          <Vertical $top={21} $track={0.38}>Visualizations</Vertical>
        </VizPane>
        <DataPane>
          <DataHead>
            <Label $size={21.2} $lh={28} $weight={600}>Data</Label>
            <ChevronSlot><DoubleChevron right /></ChevronSlot>
          </DataHead>
          <SearchBox><SearchIcon /><Label $size={18.8} $lh={26} $color="#757371">Search</Label></SearchBox>
          <TableList>
            {TABLES.map(t => (
              <TableRow key={t.name} $selected={t.selected}>
                <ExpandSlot><ExpandIcon /></ExpandSlot>
                <TableIconSlot>{t.calc ? <CalcTableIcon /> : <TableIcon />}</TableIconSlot>
                <Label $size={16.4} $track={-0.08} $color="#323130">{t.name}</Label>
              </TableRow>
            ))}
          </TableList>
        </DataPane>
      </Workspace>

      <StatusBar>
        <Label $size={16.4} $color="#484644">Page 3 of 5</Label>
        <ZoomControls>
          <ZoomSlider />
          <ZoomText><Label $size={16.4} $lh={18} $color="#605e5c">67%</Label></ZoomText>
          <FitIcon />
        </ZoomControls>
      </StatusBar>

      <Taskbar>
        <Apps>
          <TaskbarApp><WindowsLogo /></TaskbarApp>
          <TaskbarApp><SearchLogo /></TaskbarApp>
          <TaskbarApp><EdgeLogo /></TaskbarApp>
          <TaskbarApp><MonitorLogo /></TaskbarApp>
          <TaskbarApp><OutlookLogo /></TaskbarApp>
          <TaskbarApp><ChromeLogo /></TaskbarApp>
          <TaskbarApp><WpsLogo /></TaskbarApp>
          <TaskbarApp><ChromeProfileLogo /><RunMark /></TaskbarApp>
          <TaskbarApp><FolderLogo /><RunMark /></TaskbarApp>
          <TaskbarApp $active><PowerBiLogo /><RunMark $active /></TaskbarApp>
        </Apps>
        <Tray>
          <TraySlot $w={37} $top={16}><Chevron w={14} h={8} color="#fff" sw={1.8} up /></TraySlot>
          <TraySlot $w={40} $top={12}><CloudIcon /></TraySlot>
          <TraySlot $w={37} $top={12}><TouchpadIcon /></TraySlot>
          <TrayText $w={41} $align="center">ENG<br />IN</TrayText>
          <TraySlot $w={17} />
          <TraySlot $w={29} $top={12}><WifiIcon /></TraySlot>
          <TraySlot $w={30} $top={11}><VolumeIcon /></TraySlot>
          <TraySlot $w={32} $top={10}><BatteryIcon /></TraySlot>
          <TrayText $w={86} $align="right">01:11 PM<br />29-07-2025</TrayText>
        </Tray>
      </Taskbar>
    </Screen>
  );
}
